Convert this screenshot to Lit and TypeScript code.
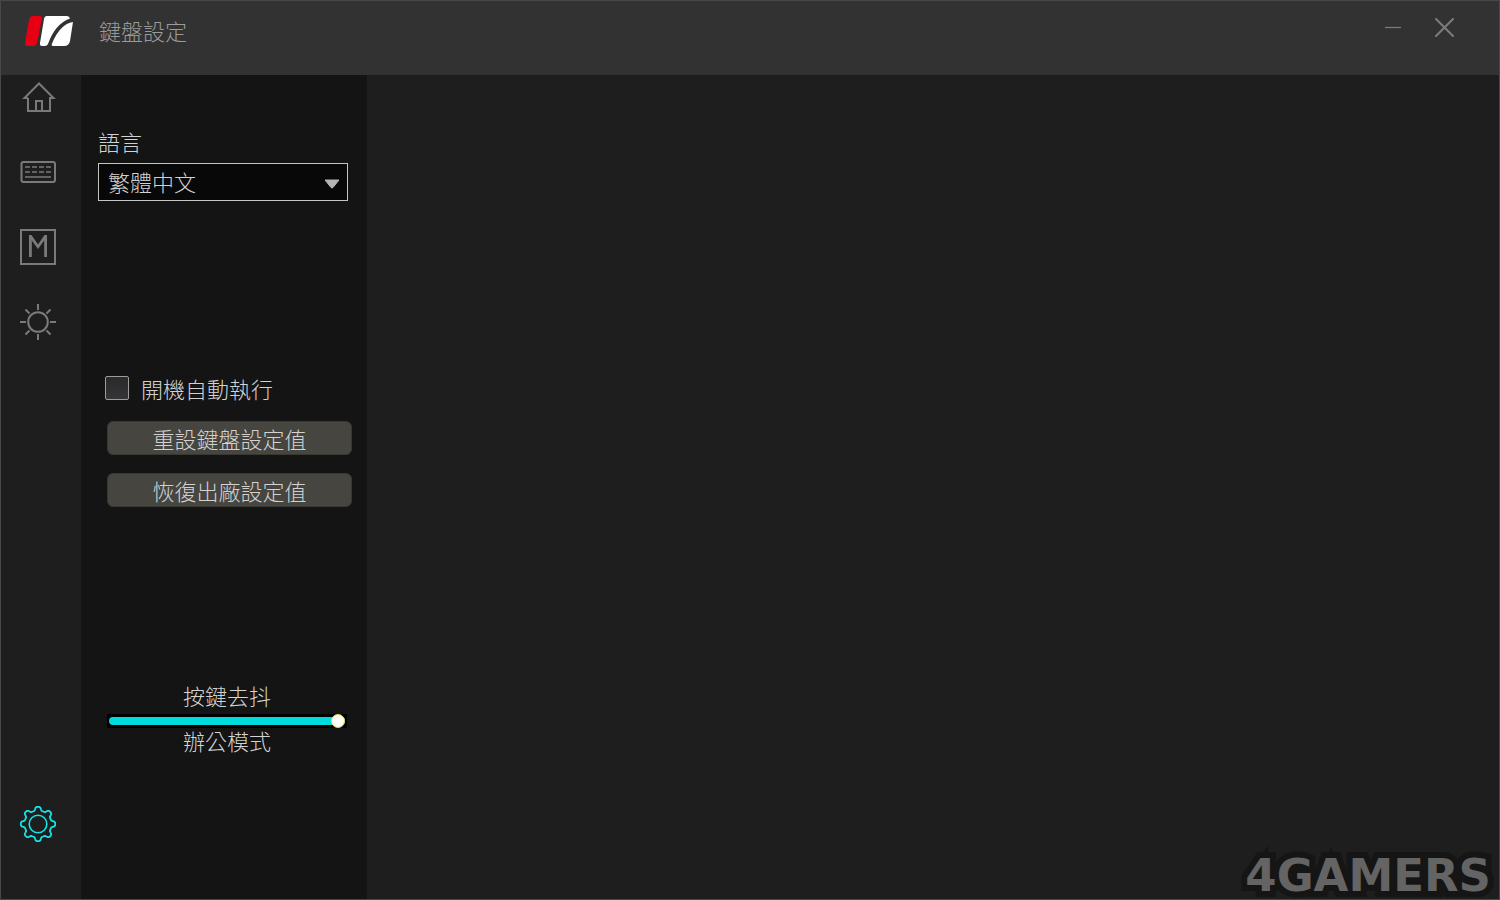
import { LitElement, html, css, svg } from "lit";
import { customElement, state } from "lit/decorators.js";

// Outline of an eight-toothed gear around (18, 18).
const gearOutline = Array.from({ length: 128 }, (_, i) => {
  const angle = (i / 128) * Math.PI * 2;
  const radius = 15.4 + 1.9 * Math.tanh(2.2 * (Math.cos(8 * angle) - 0.1));
  const x = 18 + radius * Math.cos(angle);
  const y = 18 + radius * Math.sin(angle);
  return `${x.toFixed(2)},${y.toFixed(2)}`;
}).join(" ");

const icons = {
  home: svg`<path d="M8 19H4.500L19 4.500L33.500 19H30V32H8V19M16 32V22H22V32" />`,
  keyboard: svg`<rect x="1.500" y="8" width="33.500" height="20" rx="2" />
    <path d="M5 13h5M12 13h5M19 13h5M26 13h5M5 18h5M12 18h5M19 18h5M26 18h5M5 23h26" stroke-width="1.700" />`,
  macro: svg`<rect x="1" y="1" width="34" height="34" />
    <path fill="currentColor" stroke="none" d="M9 28V6H11.500L18 15.500L24.500 6H27V28H24.200V11.500L18 20L11.800 11.500V28Z" />`,
  light: svg`<circle cx="18" cy="18" r="9.800" />
    <path d="M18 0v6M18 30v6M0 18h6M30 18h6M5.500 5.500l4 4M26.500 26.500l4 4M30.500 5.500l-4 4M9.500 26.500l-4 4" />`,
  gear: svg`<circle cx="18" cy="18" r="8.800" stroke-width="1.600" />
    <polygon stroke-width="1.800" stroke-linejoin="round" points=${gearOutline} />`,
};

type IconName = keyof typeof icons;

@customElement("app-root")
export class AppRoot extends LitElement {
  @state() private page: IconName = "gear";
  @state() private debounce = 100;

  static styles = css`
    :host {
      display: flex;
      flex-direction: column;
      box-sizing: border-box;
      min-height: 100vh;
      border: 1px solid #484848;
      background: #1e1e1e;
      color: #d2d2d2;
      font: 300 22px/32px "Noto Sans CJK TC", sans-serif;
    }
    * {
      box-sizing: border-box;
    }
    button,
    select,
    input {
      margin: 0;
      padding: 0;
      border: 0;
      font: inherit;
      color: inherit;
    }
    svg {
      display: block;
      fill: none;
      stroke: currentColor;
    }
    .titlebar {
      display: flex;
      align-items: flex-start;
      height: 74px;
      padding: 13px 44px 0 22px;
      background: #323232;
      color: #9a9a9a;
    }
    .title {
      flex: 1;
      margin: 0 0 0 24px;
      font: inherit;
    }
    .window-buttons {
      display: flex;
      gap: 32px;
      color: #7c7c7c;
    }
    .window-buttons button,
    .nav button {
      background: none;
    }
    .body {
      flex: 1;
      display: flex;
    }
    .nav {
      display: flex;
      flex-direction: column;
      align-items: flex-start;
      gap: 39px;
      width: 80px;
      padding: 4px 0 57px 19px;
      color: #7a7a7a;
    }
    .nav .active {
      color: #14e4e6;
    }
    .nav .last {
      margin-top: auto;
    }
    .panel {
      display: flex;
      flex-direction: column;
      width: 286px;
      padding: 50px 16px 0 17px;
      background: #141414;
    }
    .select-box {
      display: grid;
      align-items: center;
      width: 250px;
      margin: 6px 0 171px;
    }
    .select-box > * {
      grid-area: 1 / 1;
    }
    .select-box select {
      appearance: none;
      height: 38px;
      padding: 0 0 2px 9px;
      border: 1px solid #c4c4c4;
      background: #080808;
    }
    .select-box svg {
      justify-self: end;
      margin: 4px 8px 0 0;
      pointer-events: none;
    }
    .check {
      display: flex;
      align-items: center;
      gap: 12px;
      margin: 0 0 17px 7px;
    }
    .check input {
      appearance: none;
      width: 24px;
      height: 24px;
      border: 1px solid #9c9c9c;
      border-radius: 2px;
      background: linear-gradient(#2a2a2c, #353537);
    }
    .check input:checked {
      background: #14e4e6;
    }
    .action {
      height: 34px;
      margin: 0 -1px 18px 9px;
      border: 1px solid #383832;
      border-radius: 6px;
      background: #464540;
      line-height: 32px;
    }
    .debounce {
      display: flex;
      flex-direction: column;
      align-items: center;
      width: 240px;
      margin: 154px 0 0 9px;
    }
    .debounce input {
      appearance: none;
      width: 100%;
      height: 14px;
      margin-top: 3px;
      padding: 0 2px;
      background: #000;
    }
    .debounce output {
      line-height: 24px;
    }
    .debounce input::-webkit-slider-runnable-track {
      height: 8px;
      border-radius: 4px;
      background: #00dcdc;
    }
    .debounce input::-webkit-slider-thumb {
      appearance: none;
      width: 14px;
      height: 14px;
      margin-top: -3px;
      border: 1px solid #e4d860;
      border-radius: 50%;
      background: #fffff8;
    }
    .content {
      flex: 1;
      display: flex;
      align-items: flex-end;
      justify-content: flex-end;
      padding: 0 8px 0 0;
    }
    .brand {
      color: #646464;
      font: 700 45px/46px "DejaVu Sans", sans-serif;
      -webkit-text-stroke: 12px #151515;
      stroke-linejoin: round;
      paint-order: stroke fill;
    }
  `;

  private navButton(name: IconName, label: string, last = false) {
    return html`<button
      class="${this.page === name ? "active" : ""} ${last ? "last" : ""}"
      aria-label=${label}
      @click=${() => (this.page = name)}
    >
      <svg width="36" height="36" viewBox="0 0 36 36" stroke-width="2">${icons[name]}</svg>
    </button>`;
  }

  render() {
    return html`
      <header class="titlebar">
        <svg width="52" height="34" viewBox="0 0 52 34" stroke="none">
          <path fill="#e60012" stroke="none" d="M10 2H17Q19.500 2 19 4.500L14 29Q13.300 32 10.500 32H4.500Q1.500 32 2 29L6 6Q6.800 2 10 2Z" />
          <path fill="#fff" stroke="none" d="M24 2H44Q46.500 2 47 4.500Q32 10 25 30Q24 32 22 32H19Q16.500 32 17 29L21 5Q21.500 2 24 2Z" />
          <path fill="#fff" stroke="none" d="M50 8L47 27Q46 32 41 32H30Q28 32 29 29.500Q37 10 50 8Z" />
        </svg>
        <h1 class="title">鍵盤設定</h1>
        <div class="window-buttons">
          <button aria-label="最小化">
            <svg width="20" height="28" viewBox="0 0 20 28"><path d="M2 13.500h16" stroke-width="1.200" /></svg>
          </button>
          <button aria-label="關閉">
            <svg width="20" height="28" viewBox="0 0 20 28" stroke-width="2"><path d="M1 5l17 17M18 5L1 22" stroke-linecap="round" /></svg>
          </button>
        </div>
      </header>
      <div class="body">
        <nav class="nav">
          ${this.navButton("home", "首頁")} ${this.navButton("keyboard", "鍵盤")}
          ${this.navButton("macro", "巨集")} ${this.navButton("light", "燈光")}
          ${this.navButton("gear", "設定", true)}
        </nav>
        <section class="panel">
          <label for="language">語言</label>
          <div class="select-box">
            <select id="language">
              <option>繁體中文</option>
            </select>
            <svg width="16" height="10" viewBox="0 0 16 10">
              <path d="M1 1H15L9 8.500Q8 9.500 7 8.500Z" fill="#b4b4b4" stroke="#b4b4b4" stroke-linejoin="round" />
            </svg>
          </div>
          <label class="check"><input type="checkbox" />開機自動執行</label>
          <button class="action">重設鍵盤設定值</button>
          <button class="action">恢復出廠設定值</button>
          <div class="debounce">
            <label for="debounce">按鍵去抖</label>
            <input
              id="debounce"
              type="range"
              min="0"
              max="100"
              .value=${String(this.debounce)}
              @input=${(e: Event) => (this.debounce = Number((e.target as HTMLInputElement).value))}
            />
            <output for="debounce">辦公模式</output>
          </div>
        </section>
        <main class="content"><div class="brand">4GAMERS</div></main>
      </div>
    `;
  }
}
